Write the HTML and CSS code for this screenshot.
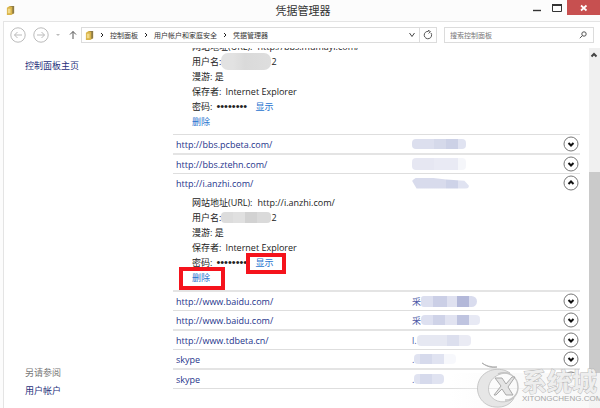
FILE: index.html
```html
<!DOCTYPE html>
<html lang="zh-CN">
<head>
    <meta charset="UTF-8">
    <meta name="viewport" content="width=device-width, initial-scale=1">
    <title>凭据管理器</title>
    <link rel="stylesheet" href="styles.css">
</head>
<body>
    <header class="titlebar">
        <svg class="vault-icon" viewBox="0 0 10 12">
            <path d="M1 3L4 1l5 0v8l-3 2H1z" fill="#d9b44a"/>
            <path d="M4 1h5v8L7 10V2z" fill="#8d7a45"/>
            <path d="M2 4h3v5H2z" fill="#f1d988"/>
        </svg>
        <h1>凭据管理器</h1>
        <div class="window-buttons">
            <button class="win-btn" aria-label="最小化"><svg viewBox="0 0 10 10"><path d="M1 7.500h8" stroke="#333" stroke-width="1.400"/></svg></button>
            <button class="win-btn" aria-label="最大化"><svg viewBox="0 0 10 10"><path d="M.5 1.500h9v7h-9z" fill="none" stroke="#333"/><path d="M0 2h10" stroke="#333" stroke-width="2"/></svg></button>
            <button class="win-btn close" aria-label="关闭"><svg viewBox="0 0 10 10"><path d="M2 2.500l5.500 5M7.500 2.500L2 7.500" stroke="#fff" stroke-width="1.700"/></svg></button>
        </div>
    </header>

    <div class="window">
        <nav class="toolbar">
            <button class="nav-btn" aria-label="后退"><svg viewBox="0 0 16 16"><circle cx="8" cy="8" r="7.200"/><path d="M12 8H4.500M7.500 5l-3 3 3 3"/></svg></button>
            <button class="nav-btn" aria-label="前进"><svg viewBox="0 0 16 16"><circle cx="8" cy="8" r="7.200"/><path d="M4 8h7.500M8.500 5l3 3-3 3"/></svg></button>
            <span class="history"></span>
            <button class="up-btn" aria-label="向上"><svg viewBox="0 0 8 10"><path d="M4 9V1.500M1 4.500l3-3 3 3"/></svg></button>
            <div class="address">
                <svg class="vault-icon" viewBox="0 0 10 12">
                    <path d="M1 3L4 1l5 0v8l-3 2H1z" fill="#d9b44a"/>
                    <path d="M4 1h5v8L7 10V2z" fill="#8d7a45"/>
                    <path d="M2 4h3v5H2z" fill="#f1d988"/>
                </svg>
                <svg class="sep" viewBox="0 0 4 6"><path d="M1 1l2 2-2 2"/></svg>
                <a href="#">控制面板</a>
                <svg class="sep" viewBox="0 0 4 6"><path d="M1 1l2 2-2 2"/></svg>
                <a href="#">用户帐户和家庭安全</a>
                <svg class="sep" viewBox="0 0 4 6"><path d="M1 1l2 2-2 2"/></svg>
                <a href="#">凭据管理器</a>
                <button class="drop-btn" aria-label="历史"><svg viewBox="0 0 8 8"><path d="M1.500 2l2.500 3.500L6.500 2"/></svg></button>
                <button class="refresh-btn" aria-label="刷新"><svg viewBox="0 0 10 10"><path d="M8 3A3.700 3.700 0 1 1 5.500 1.400M5 .2l2.500 1.400L5.600 3.500"/></svg></button>
            </div>
            <label class="search">
                <input type="text" placeholder="搜索控制面板" aria-label="搜索控制面板">
                <svg viewBox="0 0 8 8"><circle cx="5" cy="3" r="2.200"/><path d="M3.500 4.500L.8 7.200"/></svg>
            </label>
        </nav>

        <div class="content">
            <aside class="sidebar">
                <a href="#">控制面板主页</a>
                <div class="see-also">
                    <span>另请参阅</span>
                    <a href="#">用户帐户</a>
                </div>
            </aside>

            <main class="panel">
                <ul class="list">
                    <li>
                        <div class="details">
                            <p>网站地址(URL):<span class="value">http://bbs.mumayi.com/</span></p>
                            <p>用户名:<span class="mask user-mask tall"></span>2</p>
                            <p>漫游: 是</p>
                            <p>保存者:<span class="saver">Internet Explorer</span></p>
                            <p>密码:<span class="dots">••••••••</span><a href="#">显示</a></p>
                            <p><a href="#">删除</a></p>
                        </div>
                    </li>
                    <li>
                        <div class="row">
                            <a href="#">http://bbs.pcbeta.com/</a>
                            <span class="account"><i class="mask m1"></i></span>
                            <button class="toggle" aria-label="展开"><svg viewBox="0 0 16 16"><circle cx="8" cy="8" r="7"/><path d="M5.500 7L8 9.500 10.500 7"/></svg></button>
                        </div>
                    </li>
                    <li>
                        <div class="row">
                            <a href="#">http://bbs.ztehn.com/</a>
                            <span class="account"><i class="mask m2"></i></span>
                            <button class="toggle" aria-label="展开"><svg viewBox="0 0 16 16"><circle cx="8" cy="8" r="7"/><path d="M5.500 7L8 9.500 10.500 7"/></svg></button>
                        </div>
                    </li>
                    <li>
                        <div class="row">
                            <a href="#">http://i.anzhi.com/</a>
                            <span class="account"><i class="mask m3"></i></span>
                            <button class="toggle" aria-label="收起"><svg viewBox="0 0 16 16"><circle cx="8" cy="8" r="7"/><path d="M5.500 9L8 6.500 10.500 9"/></svg></button>
                        </div>
                        <div class="details">
                            <p>网站地址(URL):<span class="value">http://i.anzhi.com/</span></p>
                            <p>用户名:<span class="mask user-mask"></span>2</p>
                            <p>漫游: 是</p>
                            <p>保存者:<span class="saver">Internet Explorer</span></p>
                            <p>密码:<span class="dots">••••••••</span><a class="marked" href="#">显示</a></p>
                            <p><a class="marked wide" href="#">删除</a></p>
                        </div>
                    </li>
                    <li>
                        <div class="row">
                            <a href="#">http://www.baidu.com/</a>
                            <span class="account">采<i class="mask m4"></i></span>
                            <button class="toggle" aria-label="展开"><svg viewBox="0 0 16 16"><circle cx="8" cy="8" r="7"/><path d="M5.500 7L8 9.500 10.500 7"/></svg></button>
                        </div>
                    </li>
                    <li>
                        <div class="row">
                            <a href="#">http://www.baidu.com/</a>
                            <span class="account">采<i class="mask m5"></i></span>
                            <button class="toggle" aria-label="展开"><svg viewBox="0 0 16 16"><circle cx="8" cy="8" r="7"/><path d="M5.500 7L8 9.500 10.500 7"/></svg></button>
                        </div>
                    </li>
                    <li>
                        <div class="row">
                            <a href="#">http://www.tdbeta.cn/</a>
                            <span class="account">l.<i class="mask m6"></i></span>
                            <button class="toggle" aria-label="展开"><svg viewBox="0 0 16 16"><circle cx="8" cy="8" r="7"/><path d="M5.500 7L8 9.500 10.500 7"/></svg></button>
                        </div>
                    </li>
                    <li>
                        <div class="row">
                            <a href="#">skype</a>
                            <span class="account">.<i class="mask m7"></i></span>
                            <button class="toggle" aria-label="展开"><svg viewBox="0 0 16 16"><circle cx="8" cy="8" r="7"/><path d="M5.500 7L8 9.500 10.500 7"/></svg></button>
                        </div>
                    </li>
                    <li>
                        <div class="row">
                            <a href="#">skype</a>
                            <span class="account">.<i class="mask m8"></i></span>
                            <button class="toggle" aria-label="展开"><svg viewBox="0 0 16 16"><circle cx="8" cy="8" r="7"/><path d="M5.500 7L8 9.500 10.500 7"/></svg></button>
                        </div>
                    </li>
                </ul>
            </main>

            <div class="scrollbar">
                <svg viewBox="0 0 8 8"><path d="M1.500 5.500L4 3l2.500 2.500"/></svg>
                <div class="thumb"></div>
            </div>
        </div>
    </div>

    <div class="watermark">
        <svg viewBox="0 0 46 46">
            <path d="M6 1q5 4 15 4q-7 2-15-4z" fill="#ddd" stroke="#a8a8a8" stroke-width=".8"/>
            <path d="M34 11C24 4 8 7 3 19c-5 12 3 25 16 26 9 1 16-3 19-9-8 6-19 5-24-3C9 23 17 10 34 11z" fill="#e6e6e6" stroke="#bcbcbc" stroke-width=".8"/>
            <path d="M22 12c10-4 20 3 20 13 0 8-6 14-13 13" fill="none" stroke="#c4c4c4" stroke-width="1.500"/>
            <path d="M19 16h7l4 6 6-7h3l-7 10 5 8h-7l-4-6-6 6h-2l7-9z" fill="#e4e4e4" stroke="#a2a2a2" stroke-width=".9"/>
        </svg>
        <div class="watermark-text">
            <strong>系统城</strong>
            <span>XITONGCHENG.COM</span>
        </div>
    </div>
</body>
</html>
```
FILE: styles.css
```css
* {
    box-sizing: border-box;
}
body {
    margin: 0;
    height: 100vh;
    display: flex;
    flex-direction: column;
    overflow: hidden;
    position: relative;
    background: #fcfcfc;
    color: #222;
    font-family: "Open Sans", "Noto Sans CJK SC", sans-serif;
    font-size: 9px;
}
a {
    color: #2873cf;
    text-decoration: none;
}
button {
    padding: 0;
    border: none;
    background: none;
    display: flex;
    align-items: center;
    justify-content: center;
}
svg {
    display: block;
    fill: none;
    stroke-width: 1;
}

/* title bar */
.titlebar {
    height: 21px;
    display: grid;
    grid-template-columns: 1fr auto 1fr;
    align-items: center;
    padding-left: 6px;
}
.titlebar h1 {
    margin: 0;
    font-size: 11px;
    line-height: 20px;
    font-weight: normal;
    color: #333;
}
.vault-icon {
    width: 9px;
    height: 11px;
}
.window-buttons {
    display: flex;
    justify-content: flex-end;
    align-self: start;
}
.win-btn {
    width: 20px;
    height: 15px;
}
.win-btn svg {
    width: 10px;
    height: 10px;
}
.win-btn.close {
    width: 33px;
    background: #c75050;
}

/* address and search */
.window {
    flex: 1;
    min-height: 0;
    display: flex;
    flex-direction: column;
    margin-left: 3px;
    background: #fff;
    border-top: 1px solid #e4e4e4;
    border-left: 1px solid #e4e4e4;
}
.toolbar {
    display: flex;
    align-items: center;
    padding: 5px 6px;
    height: 26px;
}
.nav-btn {
    margin-right: 7px;
}
.nav-btn svg {
    width: 16px;
    height: 16px;
    stroke: #bbb;
}
.history {
    width: 4px;
    border: 2px solid transparent;
    border-top-color: #bbb;
    margin: 2px 9px 0 0;
}
.up-btn svg {
    width: 8px;
    height: 10px;
    stroke: #555;
}
.address {
    flex: 1;
    height: 16px;
    display: flex;
    align-items: center;
    margin: 0 7px 0 4px;
    padding-left: 3px;
    border: 1px solid #dcdcdc;
    font-size: 7px;
}
.address a {
    color: #333;
}
.sep {
    width: 4px;
    height: 6px;
    margin: 0 6px;
    stroke: #222;
}
.drop-btn {
    width: 15px;
    margin-left: auto;
}
.refresh-btn {
    width: 17px;
    height: 14px;
    border-left: 1px solid #dcdcdc;
}
.drop-btn svg {
    width: 8px;
    height: 8px;
    stroke: #444;
}
.refresh-btn svg {
    width: 10px;
    height: 10px;
    stroke: #555;
}
.search {
    width: 150px;
    height: 16px;
    display: flex;
    align-items: center;
    padding: 0 6px 0 5px;
    border: 1px solid #dcdcdc;
}
.search input {
    flex: 1;
    min-width: 0;
    padding: 0;
    border: none;
    outline: none;
    background: none;
    font: inherit;
    font-size: 7px;
}
.search input::placeholder {
    color: #777;
}
.search svg {
    width: 8px;
    height: 8px;
    stroke: #555;
}

/* content */
.content {
    flex: 1;
    min-height: 0;
    display: flex;
}
.sidebar {
    width: 169px;
    padding: 10px 21px;
    display: flex;
    flex-direction: column;
    line-height: 15px;
}
.sidebar a {
    color: #27307c;
}
.see-also {
    margin-top: auto;
    display: flex;
    flex-direction: column;
    gap: 3px;
    color: #777;
}
.panel {
    flex: 1;
    min-width: 0;
    overflow: hidden;
    padding-right: 9px;
}
/* scrolled part way through the first entry */
.list {
    margin: -12px 0 0;
    padding: 0;
    list-style: none;
}
.list li {
    border-bottom: 1px solid #dedede;
}
.list li:nth-child(even) {
    border-bottom: 2px solid #e4e4e4;
}
.row {
    height: 18px;
    display: grid;
    grid-template-columns: 236px 1fr auto;
    align-items: center;
    padding: 0 1px 0 3px;
}
.row a {
    color: #26358c;
}
.account {
    display: flex;
    align-items: center;
    height: 18px;
    color: #4a56a5;
}
.toggle svg {
    width: 16px;
    height: 16px;
    stroke: #777;
}
.toggle path {
    stroke: #111;
    stroke-width: 2;
}
.details {
    padding: 3px 0 5px 19px;
}
.details p {
    margin: 0;
    height: 15px;
    line-height: 15px;
    display: flex;
    align-items: center;
}
.value {
    margin-left: 5px;
}
.saver {
    margin-left: 4px;
}
.dots {
    width: 34px;
    margin: 0 5px 0 4px;
    font-family: "Liberation Sans", sans-serif;
    font-size: 11px;
}

/* smudges over private data */
.mask {
    display: block;
    height: 10px;
    border-radius: 4px;
}
.user-mask {
    width: 50px;
    height: 11px;
    background: linear-gradient(90deg, #dcdcdc 12px, #e0e0e0 12px 24px, #d2d2d2 24px 36px, #dadada 36px);
}
.user-mask.tall {
    height: 17px;
    border-radius: 7px;
    background: linear-gradient(90deg, #e2e2e2 12px, #dadada 24px, #dedede);
}
.m1 {
    width: 54px;
    background: linear-gradient(90deg, #dcdfee 22px, #d5d9ea 22px 34px, #ccd1e6 34px 46px, #e0e3f1 46px);
}
.m2 {
    width: 54px;
    height: 12px;
    background: linear-gradient(90deg, #e6e7f2 22px, #e9eaf4 22px 46px, #f5f6fa 46px);
}
.m3 {
    width: 57px;
    height: 11px;
    clip-path: polygon(0 30%, 6% 5%, 30% 0, 60% 18%, 92% 30%, 100% 75%, 100% 100%, 8% 100%);
    background: linear-gradient(90deg, #d8dbec 34px, #ced3e8 34px 46px, #e0e3f1 46px);
}
.m4 {
    width: 56px;
    height: 11px;
    border-radius: 3px 6px 6px 3px;
    background: linear-gradient(90deg, #dcdfef 12px, #cbcfe6 12px 26px, #dfe1f0 26px 36px, #b3b8d9 36px 48px, #d9dcee 48px);
}
.m5 {
    width: 59px;
    background: linear-gradient(90deg, #dde0f0 12px, #cfd3e8 12px 24px, #e1e3f1 24px 36px, #bfc4e0 36px 48px, #e7e9f4 48px);
}
.m6 {
    width: 54px;
    height: 11px;
    background: linear-gradient(90deg, #e6e8f2 30px, #dcdfee 30px 42px, #eaebf4 42px);
}
.m7 {
    width: 42px;
    background: linear-gradient(90deg, #e0e3f1 6px, #d6daec 6px 18px, #e0e3f1 18px 30px, #f7f8fc 30px);
}
.m8 {
    width: 30px;
    background: linear-gradient(90deg, #e0e3f1 6px, #d6daec 6px 18px, #e0e3f1 18px);
}

/* red frames round the two links to click */
.marked {
    position: relative;
}
.marked::after {
    content: "";
    position: absolute;
    inset: -2px -13px -4px -9px;
    border: 4px solid #f5131c;
}
.marked.wide::after {
    inset: -3px -15px -5px -13px;
}

.scrollbar {
    width: 11px;
    display: flex;
    flex-direction: column;
    background: #f0f0f0;
}
.scrollbar svg {
    width: 8px;
    height: 8px;
    margin: 3px auto 0 1px;
    stroke: #444;
    stroke-width: 2;
}
.thumb {
    flex: 1;
    margin-top: 113px;
    background: #cacaca;
}

/* watermark */
.watermark {
    position: absolute;
    right: 0;
    bottom: 0;
    width: 150px;
    height: 35px;
    display: flex;
    align-items: flex-end;
    padding-left: 26px;
    background: linear-gradient(90deg, rgba(255, 255, 255, 0), rgba(248, 248, 248, 0.9) 60%);
}
.watermark svg {
    flex: none;
    width: 46px;
    height: 46px;
}
.watermark-text {
    flex: none;
    height: 39px;
    display: flex;
    flex-direction: column;
    color: #eee;
}
.watermark-text strong {
    font-size: 25px;
    line-height: 25px;
    -webkit-text-stroke: 1px #b8b8b8;
    paint-order: stroke;
}
.watermark-text span {
    font-family: "Liberation Sans", sans-serif;
    font-size: 8px;
    line-height: 9px;
    color: #a8a8a8;
}
```
